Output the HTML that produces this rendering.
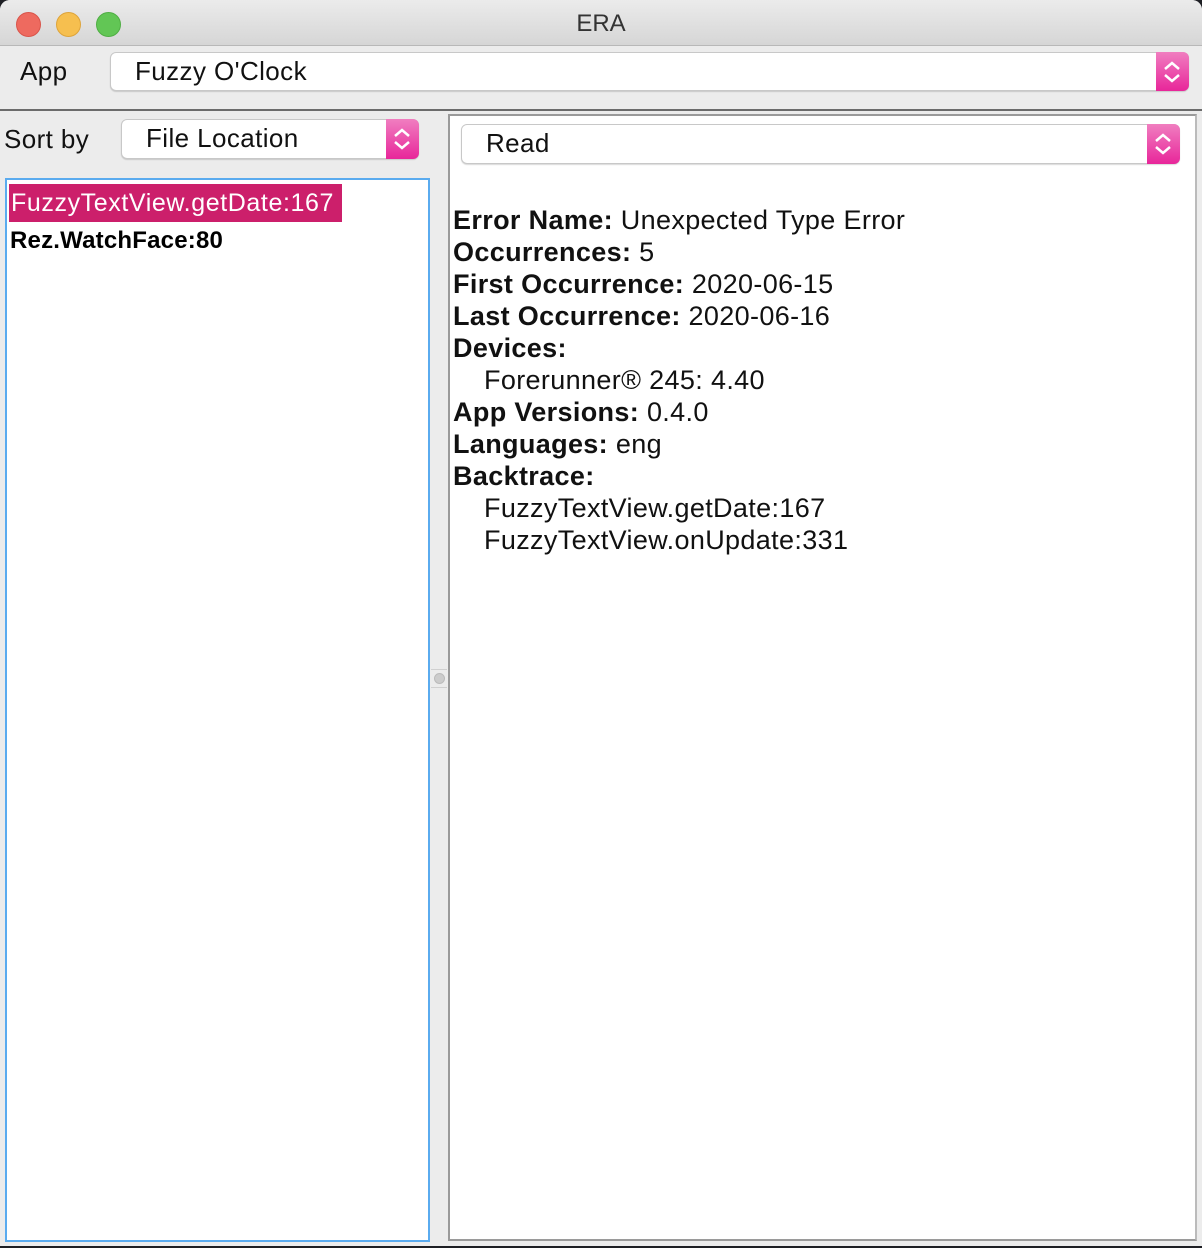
<!DOCTYPE html>
<html><head><style>
*{margin:0;padding:0;box-sizing:border-box}
body{width:1202px;height:1248px;background:#1e1f24;font-family:"Liberation Sans",sans-serif;position:relative;overflow:hidden}
.win{position:absolute;left:0;top:0;width:1202px;height:1246px;background:#ececec;border-radius:10px 10px 0 0;overflow:hidden}
.title{position:absolute;left:0;top:0;width:1202px;height:46px;background:linear-gradient(#ebebeb,#d6d6d6);border-bottom:1px solid #b8b8b8;text-align:center;font-size:24px;line-height:48px;color:#333}
.dot{position:absolute;top:12px;width:25px;height:25px;border-radius:50%}
.combo{position:absolute;background:#fff;border:1px solid #c8c8c8;border-radius:6px;box-shadow:0 1px 1px rgba(0,0,0,.15);font-size:26px;line-height:36px;padding-left:24px;color:#111;letter-spacing:0.4px}
.arr{position:absolute;right:-1px;top:-1px;bottom:-1px;width:33px;background:linear-gradient(#f07ec0,#e8269a);border-radius:0 6px 6px 0}
.arr svg{position:absolute;left:6px;top:50%;margin-top:-11px}
.lbl{position:absolute;font-size:26px;color:#111;letter-spacing:0.4px}
.list{position:absolute;left:5px;top:178px;width:425px;height:1064px;background:#fff;border:2px solid #5aabef}
.sel{position:absolute;left:2px;top:4px;width:333px;height:38px;background:#cc1f6b;color:#fff;font-size:25px;line-height:38px;padding-left:2px;letter-spacing:0.6px}
.right{position:absolute;left:448px;top:114px;width:749px;height:1127px;background:#fff;border:2px solid #9a9a9a;border-right-color:#bbb}
.info{position:absolute;left:3px;top:88px;font-size:27px;line-height:32px;color:#111;white-space:nowrap;letter-spacing:0.35px}
.info b{font-weight:bold}
.ind{padding-left:31px}
</style></head><body>
<div class="win">
<div class="title">ERA
<div class="dot" style="left:16px;background:#ee6a5f;border:1px solid #d9544a"></div>
<div class="dot" style="left:56px;background:#f6bf4f;border:1px solid #dea43a"></div>
<div class="dot" style="left:96px;background:#62c655;border:1px solid #4fae43"></div>
</div>
<div class="lbl" style="left:20px;top:56px">App</div>
<div class="combo" style="left:110px;top:52px;width:1079px;height:39px">Fuzzy O'Clock<div class="arr"><svg width="20" height="22" viewBox="0 0 20 22"><path d="M3 8 L10 2 L17 8 M3 14 L10 20 L17 14" stroke="#fff" stroke-width="2.5" fill="none"/></svg></div></div>
<div style="position:absolute;left:0;top:109px;width:1202px;height:2px;background:#6b6b6b"></div>
<div class="lbl" style="left:4px;top:124px">Sort by</div>
<div class="combo" style="left:121px;top:119px;width:298px;height:40px">File Location<div class="arr"><svg width="20" height="22" viewBox="0 0 20 22"><path d="M3 8 L10 2 L17 8 M3 14 L10 20 L17 14" stroke="#fff" stroke-width="2.5" fill="none"/></svg></div></div>
<div class="list">
<div class="sel">FuzzyTextView.getDate:167</div>
<div style="position:absolute;left:3px;top:45px;font-size:24px;font-weight:bold;line-height:32px;color:#000;letter-spacing:0.2px">Rez.WatchFace:80</div>
</div>
<div style="position:absolute;left:431px;top:669px;width:16px;height:19px;border-top:1px solid #d0d0d0;border-bottom:1px solid #d0d0d0"><div style="position:absolute;left:3px;top:3px;width:11px;height:11px;border-radius:50%;background:#ccc;border:1px solid #bbb"></div></div>
<div class="right">
<div class="combo" style="left:11px;top:8px;width:719px;height:40px">Read<div class="arr"><svg width="20" height="22" viewBox="0 0 20 22"><path d="M3 8 L10 2 L17 8 M3 14 L10 20 L17 14" stroke="#fff" stroke-width="2.5" fill="none"/></svg></div></div>
<div class="info">
<div><b>Error Name:</b> Unexpected Type Error</div>
<div><b>Occurrences:</b> 5</div>
<div><b>First Occurrence:</b> 2020-06-15</div>
<div><b>Last Occurrence:</b> 2020-06-16</div>
<div><b>Devices:</b></div>
<div class="ind">Forerunner® 245: 4.40</div>
<div><b>App Versions:</b> 0.4.0</div>
<div><b>Languages:</b> eng</div>
<div><b>Backtrace:</b></div>
<div class="ind">FuzzyTextView.getDate:167</div>
<div class="ind">FuzzyTextView.onUpdate:331</div>
</div>
</div>
</div>
</body></html>
